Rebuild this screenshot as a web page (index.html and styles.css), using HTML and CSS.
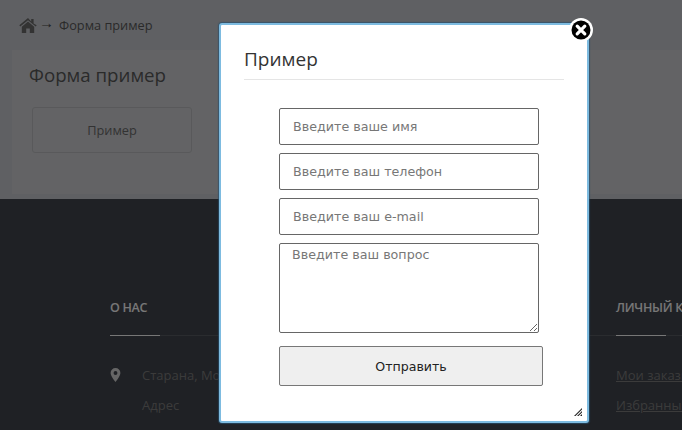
FILE: index.html
```html
<!DOCTYPE html>
<html lang="ru">
<head>
<meta charset="utf-8">
<title>Форма пример</title>
<link rel="stylesheet" href="styles.css">
</head>
<body>
<div class="page">
  <nav class="crumbs">
    <svg class="home" viewBox="0 0 18 16" width="18" height="16"><path d="M9 1 0.3 8.3l1 1.2L9 3.2l7.700 6.300 1-1.200L14.600 6.500V2h-2.400v2.400z"/><path d="M9 4.600 2.800 9.800V16h4.400v-4.400h3.600V16h4.400V9.800z"/></svg>
    <span class="arrow">→</span>
    <span class="crumb">Форма пример</span>
  </nav>
  <main class="panel">
    <h1>Форма пример</h1>
    <div class="tile">Пример</div>
  </main>
  <footer class="footer">
    <section class="col col-about">
      <h3>О НАС</h3>
      <div class="rule"></div>
      <div class="addr">
        <svg class="pin" viewBox="0 0 12 16" width="11" height="14"><path fill-rule="evenodd" d="M6 0a5.600 5.600 0 0 0-5.600 5.600C.4 9 6 16 6 16s5.600-7 5.600-10.400A5.600 5.600 0 0 0 6 0zm0 3.500a2.200 2.200 0 1 1 0 4.400 2.200 2.200 0 0 1 0-4.400z"/></svg>
        <div class="addr-text"><p>Старана, Москва</p><p>Адрес</p></div>
      </div>
    </section>
    <section class="col col-account">
      <h3>ЛИЧНЫЙ КАБИНЕТ</h3>
      <div class="rule"></div>
      <p><a href="#">Мои заказы</a></p>
      <p><a href="#">Избранные</a></p>
    </section>
  </footer>
</div>
<div class="overlay"></div>
<div class="modal">
  <h2>Пример</h2>
  <form class="form">
    <input type="text" placeholder="Введите ваше имя">
    <input type="text" placeholder="Введите ваш телефон">
    <input type="text" placeholder="Введите ваш e-mail">
    <textarea placeholder="Введите ваш вопрос"></textarea>
    <button type="button">Отправить</button>
  </form>
  <svg class="grip" viewBox="0 0 8 8" width="8" height="8"><path d="M8 0v1.500L1.500 8H0zM8 3v1.500L4.500 8H3zM8 6v2H6z"/></svg>
  <div class="close"><svg viewBox="0 0 24 24" width="24" height="24"><circle cx="12" cy="12" r="12" fill="#fff"/><circle cx="12" cy="12" r="9.500" fill="#000"/><path d="M8.200 8.200l7.600 7.600M15.800 8.200l-7.600 7.600" stroke="#fff" stroke-width="3.200" stroke-linecap="round"/></svg></div>
</div>
</body>
</html>
```
FILE: styles.css
```css
* { box-sizing: border-box; }
html, body { margin: 0; height: 430px; overflow: hidden; }
body { font-family: "Open Sans", sans-serif; background: #fff; position: relative; }
.page { height: 430px; display: flex; flex-direction: column; background: #bfc1c7; overflow: hidden; }
.crumbs { height: 50px; display: flex; align-items: center; padding-left: 19px; color: #555; font-size: 12.750px; }
.home { fill: #666; }
.arrow { margin: 0 0 5px 2px; font-family: "Liberation Sans", sans-serif; font-size: 15px; line-height: 1; color: #444; }
.crumb { margin-left: 5px; }
.panel { height: 144px; margin: 0 0 5px 12px; background: #c6c7cb; padding: 12px 0 0 17px; }
.panel h1 { margin: 0; font-size: 18.700px; font-weight: 400; line-height: 26px; color: #555; }
.tile { width: 160px; height: 46px; margin: 19px 0 0 3px; border: 1px solid #b2b3b6; border-radius: 3px; display: flex; align-items: center; justify-content: center; font-size: 12.800px; color: #666; }
.footer { flex: 1; background: #3e424a; display: flex; padding: 99px 0 0 110px; }
.col { flex: none; }
.col h3 { margin: 0; font-size: 12.500px; letter-spacing: -0.3px; line-height: 20px; font-weight: 600; color: #eee; white-space: nowrap; }
.rule { height: 1px; background: #54585f; margin: 17px 0 30px; }
.rule::before { content: ""; display: block; width: 50px; height: 1px; background: #eee; }
.col-about { width: 506px; }
.addr { display: flex; }
.pin { fill: #ccc; margin: 2px 0 0 0; flex: none; }
.addr-text { margin-left: 21px; }
.col p { margin: 0 0 12px; font-size: 13px; line-height: 18px; color: #777; white-space: nowrap; }
.col a { color: #777; }
.overlay { position: absolute; inset: 0; background: rgba(0, 0, 0, 0.5); }
.modal { position: absolute; left: 219px; top: 23px; width: 370px; height: 400px; background: #fff; border: 2px solid #7dbbe0; border-radius: 3px; box-shadow: 0 0 1px 1px rgba(40, 80, 110, 0.7); padding: 20px 23px 0; }
.modal h2 { margin: 0; height: 35px; font-size: 19px; font-weight: 400; line-height: 28px; color: #333; border-bottom: 1px solid #e5e5e5; }
.form { display: flex; flex-direction: column; align-items: flex-start; margin: 28px 0 0 35px; }
.form input, .form textarea { display: block; width: 260px; border: 1px solid #666; border-radius: 2px; background: #fff; font-family: "DejaVu Sans", sans-serif; font-size: 12.700px; margin: 0 0 8px; outline: none; }
.form input { height: 37px; padding: 0 13px; }
.form textarea { height: 90px; padding: 3px 12px; resize: vertical; }
.form ::placeholder { color: #777; opacity: 1; }
.form button { width: 264px; height: 40px; margin-top: 5px; background: #efefef; border: 1px solid #777; border-radius: 2px; font-family: "DejaVu Sans", sans-serif; font-size: 12.600px; color: #222; }
.grip { position: absolute; right: 5px; bottom: 5px; fill: #222; }
.close { position: absolute; right: -6px; top: -7px; width: 24px; height: 24px; }
.close svg { display: block; }
```
